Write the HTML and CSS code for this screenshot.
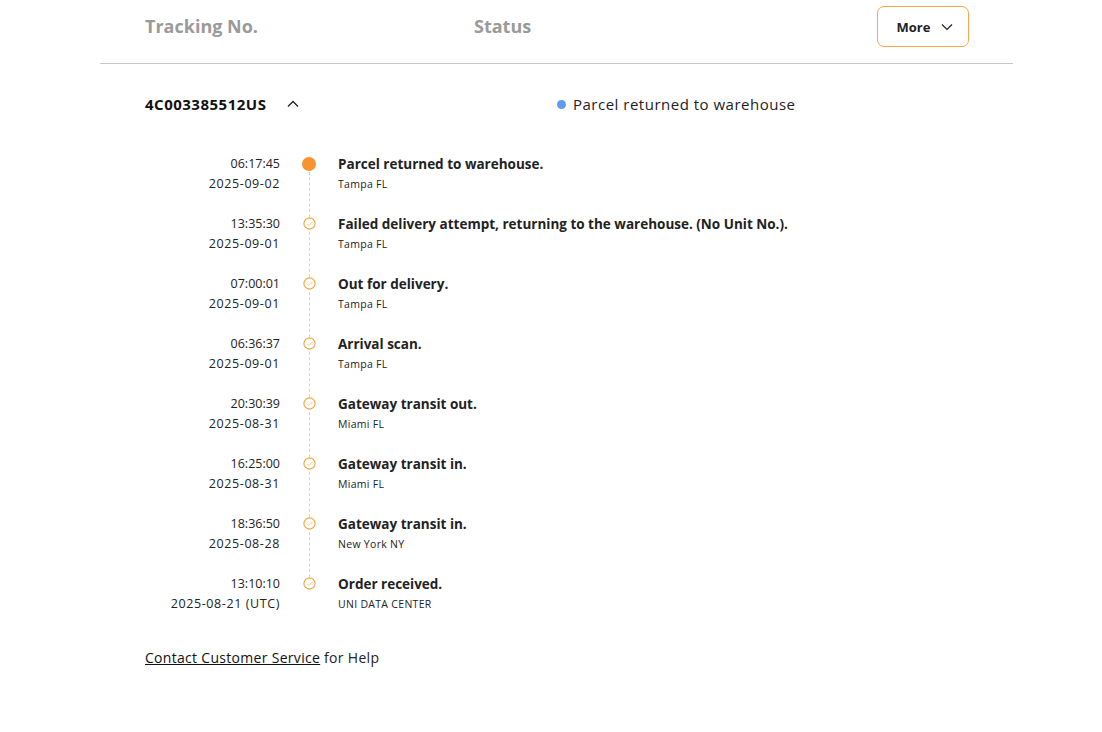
FILE: index.html
```html
<!DOCTYPE html>
<html>
<head>
<meta charset="utf-8">
<link rel="stylesheet" href="styles.css">
</head>
<body>
<div class="wrap">
  <div class="head">
    <div class="h-track">Tracking No.</div>
    <div class="h-status">Status</div>
    <button class="more">More
      <svg width="12" height="8" viewBox="0 0 12 8"><path d="M1 1.5 L6 6.5 L11 1.5" fill="none" stroke="#222" stroke-width="1.2"/></svg>
    </button>
  </div>
  <div class="row">
    <div class="num">4C003385512US
      <svg class="chev" width="12" height="8" viewBox="0 0 12 8"><path d="M1 6.5 L6 1.5 L11 6.5" fill="none" stroke="#222" stroke-width="1.3"/></svg>
    </div>
    <div class="st"><span class="bdot"></span>Parcel returned to warehouse</div>
  </div>
  <ul class="tl">
    <li class="ev">
      <div class="when"><div>06:17:45</div><div>2025-09-02</div></div>
      <div class="mark"><span class="fill"></span></div>
      <div class="what"><div class="t">Parcel returned to warehouse.</div><div class="loc">Tampa FL</div></div>
    </li>
    <li class="ev">
      <div class="when"><div>13:35:30</div><div>2025-09-01</div></div>
      <div class="mark"><svg width="13" height="13" viewBox="0 0 13 13"><circle cx="6.5" cy="6.5" r="5.6" fill="#fff" stroke="#f7a23b" stroke-width="1.1"/><path d="M4 6.7 L5.9 8.5 L9.2 4.8" fill="none" stroke="#fbc98e" stroke-width="1"/></svg></div>
      <div class="what"><div class="t">Failed delivery attempt, returning to the warehouse. (No Unit No.).</div><div class="loc">Tampa FL</div></div>
    </li>
    <li class="ev">
      <div class="when"><div>07:00:01</div><div>2025-09-01</div></div>
      <div class="mark"><svg width="13" height="13" viewBox="0 0 13 13"><circle cx="6.5" cy="6.5" r="5.6" fill="#fff" stroke="#f7a23b" stroke-width="1.1"/><path d="M4 6.7 L5.9 8.5 L9.2 4.8" fill="none" stroke="#fbc98e" stroke-width="1"/></svg></div>
      <div class="what"><div class="t">Out for delivery.</div><div class="loc">Tampa FL</div></div>
    </li>
    <li class="ev">
      <div class="when"><div>06:36:37</div><div>2025-09-01</div></div>
      <div class="mark"><svg width="13" height="13" viewBox="0 0 13 13"><circle cx="6.5" cy="6.5" r="5.6" fill="#fff" stroke="#f7a23b" stroke-width="1.1"/><path d="M4 6.7 L5.9 8.5 L9.2 4.8" fill="none" stroke="#fbc98e" stroke-width="1"/></svg></div>
      <div class="what"><div class="t">Arrival scan.</div><div class="loc">Tampa FL</div></div>
    </li>
    <li class="ev">
      <div class="when"><div>20:30:39</div><div>2025-08-31</div></div>
      <div class="mark"><svg width="13" height="13" viewBox="0 0 13 13"><circle cx="6.5" cy="6.5" r="5.6" fill="#fff" stroke="#f7a23b" stroke-width="1.1"/><path d="M4 6.7 L5.9 8.5 L9.2 4.8" fill="none" stroke="#fbc98e" stroke-width="1"/></svg></div>
      <div class="what"><div class="t">Gateway transit out.</div><div class="loc">Miami FL</div></div>
    </li>
    <li class="ev">
      <div class="when"><div>16:25:00</div><div>2025-08-31</div></div>
      <div class="mark"><svg width="13" height="13" viewBox="0 0 13 13"><circle cx="6.5" cy="6.5" r="5.6" fill="#fff" stroke="#f7a23b" stroke-width="1.1"/><path d="M4 6.7 L5.9 8.5 L9.2 4.8" fill="none" stroke="#fbc98e" stroke-width="1"/></svg></div>
      <div class="what"><div class="t">Gateway transit in.</div><div class="loc">Miami FL</div></div>
    </li>
    <li class="ev">
      <div class="when"><div>18:36:50</div><div>2025-08-28</div></div>
      <div class="mark"><svg width="13" height="13" viewBox="0 0 13 13"><circle cx="6.5" cy="6.5" r="5.6" fill="#fff" stroke="#f7a23b" stroke-width="1.1"/><path d="M4 6.7 L5.9 8.5 L9.2 4.8" fill="none" stroke="#fbc98e" stroke-width="1"/></svg></div>
      <div class="what"><div class="t">Gateway transit in.</div><div class="loc">New York NY</div></div>
    </li>
    <li class="ev last">
      <div class="when"><div>13:10:10</div><div>2025-08-21 (UTC)</div></div>
      <div class="mark"><svg width="13" height="13" viewBox="0 0 13 13"><circle cx="6.5" cy="6.5" r="5.6" fill="#fff" stroke="#f7a23b" stroke-width="1.1"/><path d="M4 6.7 L5.9 8.5 L9.2 4.8" fill="none" stroke="#fbc98e" stroke-width="1"/></svg></div>
      <div class="what"><div class="t">Order received.</div><div class="loc">UNI DATA CENTER</div></div>
    </li>
  </ul>
  <p class="help"><a href="#">Contact Customer Service</a> for Help</p>
</div>
</body>
</html>
```
FILE: styles.css
```css
* { box-sizing: border-box; }
html, body { margin: 0; padding: 0; background: #fff; }
body { font-family: "Open Sans", "Noto Sans", sans-serif; color: #222; }
.wrap { width: 913px; margin-left: 100px; }
.head {
  height: 64px;
  border-bottom: 1px solid #c8c8c8;
  display: flex;
  align-items: flex-start;
  padding-left: 45px;
}
.h-track, .h-status {
  font-size: 18px; font-weight: 700; color: #9a9a9a;
  line-height: 24px; margin-top: 14px;
}
.h-track { width: 329px; }
.h-status { flex: 1; }
.more {
  margin-top: 6px; margin-right: 44px;
  width: 92px; height: 41px;
  border: 1.5px solid #f9a54f; border-radius: 7px; background: #fff;
  font-family: inherit; font-size: 13px; font-weight: 700; color: #222;
  display: flex; align-items: center; justify-content: center; gap: 11px;
  padding: 0 0 0 4px;
}
.row {
  display: flex; align-items: center; padding-left: 45px;
  margin-top: 28px; height: 24px;
}
.num { width: 412px; font-size: 15px; font-weight: 700; letter-spacing: 0.5px; color: #111; display: flex; align-items: center; }
.chev { margin-left: 21px; }
.st { font-size: 15px; letter-spacing: 0.5px; display: flex; align-items: center; }
.bdot { width: 9px; height: 9px; border-radius: 50%; background: #5e9bf3; margin-right: 7px; }
.tl { list-style: none; margin: 38px 0 0 0; padding: 0; }
.ev { display: flex; height: 60px; }
.when { width: 180px; text-align: right; font-size: 12.5px; line-height: 20px; color: #222; }
.when div:last-child { letter-spacing: 0.6px; }
.mark { width: 58px; position: relative; display: flex; justify-content: center; padding-top: 3px; }
.ev:not(.last) .mark::after {
  content: ""; position: absolute; left: 28.5px; top: 18px; bottom: -3px;
  border-left: 1px dashed #d4d4d4;
}
.mark svg { display: block; }
.fill { display: block; width: 14px; height: 14px; border-radius: 50%; background: #f79430; }
.what { line-height: 20px; }
.t { font-size: 13.5px; font-weight: 700; color: #222; }
.loc { font-size: 10.5px; letter-spacing: 0.3px; color: #222; }
.help { margin: 14px 0 0 45px; font-size: 14px; letter-spacing: 0.3px; color: #222; }
.help a { color: #111; text-decoration: underline; }
```
